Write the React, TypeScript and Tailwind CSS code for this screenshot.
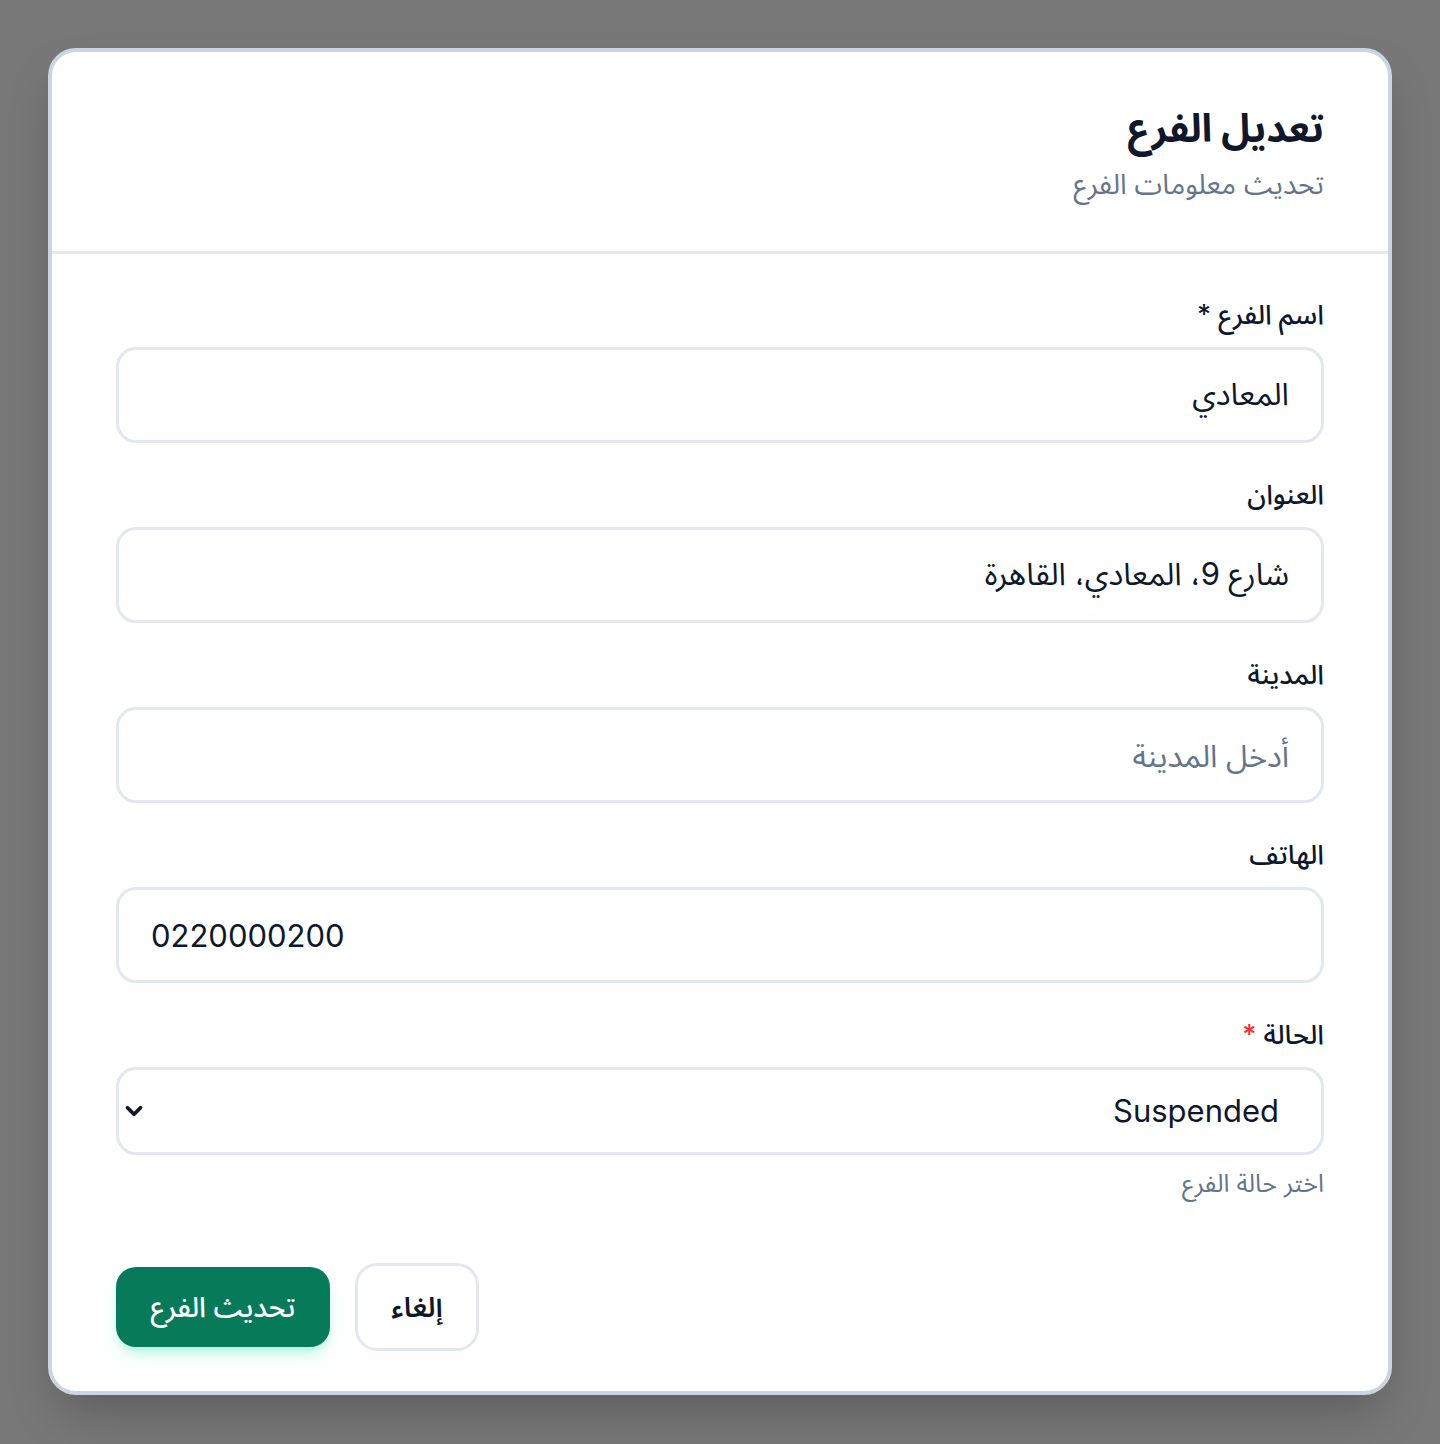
import { ChevronDown } from 'lucide-react'

const Field = ({ label, children, req }: { label: string; children: React.ReactNode; req?: 'plain' | 'red' }) => (
    <div className="flex flex-col gap-4">
        <label className="text-[27px] leading-8 font-medium text-[#0f172a]">
            {label}
            {req === 'plain' && <span> *</span>}
            {req === 'red' && <span className="text-red-500"> *</span>}
        </label>
        {children}
    </div>
)

const inputCls =
    'h-[96px] w-full rounded-[20px] border-[3px] border-[#e2e8f0] bg-white px-[32px] text-[31px] text-[#0f172a] placeholder:text-[#64748b] outline-none'

export default function App() {
    return (
        <div
            dir="rtl"
            className="min-h-[1444px] w-full bg-[#787878] p-[48px]"
            style={{ fontFamily: "Inter, 'Noto Sans Arabic', 'Noto Sans', 'DejaVu Sans', sans-serif" }}
        >
            <div className="flex flex-col rounded-[28px] border-4 border-[#cbd5e1] bg-white shadow-2xl">
                {/* header */}
                <div className="flex flex-col gap-[14px] border-b-[3px] border-[#e2e8f0] px-[64px] pt-[52px] pb-[49px]">
                    <h2 className="text-[39px] leading-[48px] font-bold text-[#0f172a]">تعديل الفرع</h2>
                    <p className="text-[28px] leading-9 text-[#64748b]">تحديث معلومات الفرع</p>
                </div>

                <div className="flex flex-col px-[64px] pt-[45px] pb-[40px]">
                    <div className="flex flex-col gap-[36px]">
                        <Field label="اسم الفرع" req="plain">
                            <input className={inputCls} defaultValue="المعادي" />
                        </Field>
                        <Field label="العنوان">
                            <input className={inputCls} defaultValue="شارع 9، المعادي، القاهرة" />
                        </Field>
                        <Field label="المدينة">
                            <input className={inputCls} placeholder="أدخل المدينة" />
                        </Field>
                        <Field label="الهاتف">
                            <input className={inputCls} dir="ltr" defaultValue="0220000200" />
                        </Field>
                        <div className="flex flex-col">
                            <Field label="الحالة" req="red">
                                <div className="relative">
                                    <select
                                        defaultValue="suspended"
                                        className="h-[88px] w-full appearance-none rounded-[20px] border-[3px] border-[#e2e8f0] bg-white pr-[42px] pl-[40px] text-[31px] text-[#0f172a] outline-none"
                                    >
                                        <option value="active">Active</option>
                                        <option value="suspended">Suspended</option>
                                    </select>
                                    <ChevronDown
                                        className="pointer-events-none absolute top-1/2 left-[5px] h-[26px] w-[26px] -translate-y-1/2 text-[#0f172a]"
                                        strokeWidth={3.5}
                                    />
                                </div>
                            </Field>
                            <p className="mt-[13px] text-[25px] leading-[30px] text-[#64748b]">اختر حالة الفرع</p>
                        </div>
                    </div>

                    <div className="mt-[65px] flex items-center justify-end gap-[25px]">
                        <button className="h-[88px] w-[124px] rounded-[22px] border-[3px] border-[#e2e8f0] bg-white text-[28px] font-semibold text-[#0f172a]">
                            إلغاء
                        </button>
                        <button className="h-[80px] w-[214px] rounded-[20px] bg-[#077a5a] text-[28px] font-medium text-white shadow-lg shadow-emerald-400/25">
                            تحديث الفرع
                        </button>
                    </div>
                </div>
            </div>
        </div>
    )
}
